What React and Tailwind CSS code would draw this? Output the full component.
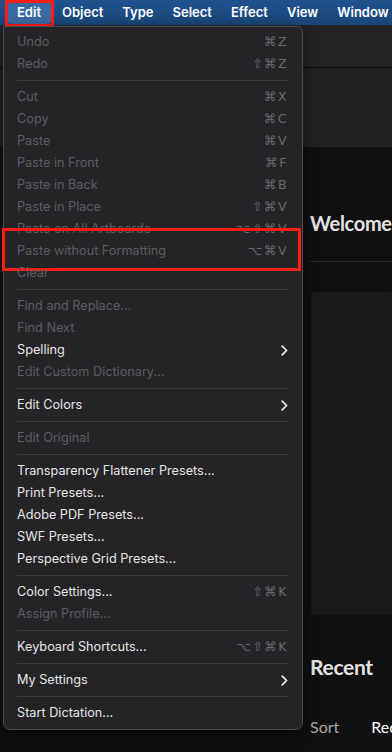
import React from "react";

const menuBar = ["Edit", "Object", "Type", "Select", "Effect", "View", "Window"];

const groups = [
    [
        { label: "Undo", keys: "⌘Z" },
        { label: "Redo", keys: "⇧⌘Z" },
    ],
    [
        { label: "Cut", keys: "⌘X" },
        { label: "Copy", keys: "⌘C" },
        { label: "Paste", keys: "⌘V" },
        { label: "Paste in Front", keys: "⌘F" },
        { label: "Paste in Back", keys: "⌘B" },
        { label: "Paste in Place", keys: "⇧⌘V" },
        { label: "Paste on All Artboards", keys: "⌥⇧⌘V" },
        { label: "Paste without Formatting", keys: "⌥⌘V", marked: true },
        { label: "Clear" },
    ],
    [
        { label: "Find and Replace..." },
        { label: "Find Next" },
        { label: "Spelling", on: true, sub: true },
        { label: "Edit Custom Dictionary..." },
    ],
    [{ label: "Edit Colors", on: true, sub: true }],
    [{ label: "Edit Original" }],
    [
        { label: "Transparency Flattener Presets...", on: true },
        { label: "Print Presets...", on: true },
        { label: "Adobe PDF Presets...", on: true },
        { label: "SWF Presets...", on: true },
        { label: "Perspective Grid Presets...", on: true },
    ],
    [
        { label: "Color Settings...", keys: "⇧⌘K", on: true },
        { label: "Assign Profile..." },
    ],
    [{ label: "Keyboard Shortcuts...", keys: "⌥⇧⌘K", on: true }],
    [{ label: "My Settings", on: true, sub: true }],
    [{ label: "Start Dictation...", on: true }],
];

function Chevron() {
    return (
        <svg width="7" height="11" viewBox="0 0 7 11" fill="none">
            <path d="M1.2 1.2L5.6 5.5L1.2 9.8" stroke="#ededed" strokeWidth="1.7" strokeLinecap="round" strokeLinejoin="round" />
        </svg>
    );
}

function MenuRow({ item }) {
    return (
        <div className="relative flex h-[22px] items-center justify-between pl-[13px] pr-[14px]">
            <span className={item.on ? "text-[#e6e6e6]" : "text-[#5d5c60]"}>
                {item.label}
            </span>
            {item.keys && (
                <span className="text-[12.5px] tracking-[1.5px] text-[#68676b]" style={{ fontFamily: "'DejaVu Sans', sans-serif" }}>
                    {item.keys}
                </span>
            )}
            {item.sub && <Chevron />}
            {/* red annotation box */}
            {item.marked && (
                <div className="absolute left-[-2px] right-[1px] top-[-12px] h-[43px] border-[3px] border-[#ff1d16]" />
            )}
        </div>
    );
}

export default function App() {
    return (
        <div className="relative h-[752px] w-[392px] overflow-hidden bg-[#101010]" style={{ fontFamily: "Inter, 'Noto Sans', sans-serif" }}>

            {/* menu bar */}
            <div className="flex h-[25px] items-center bg-gradient-to-b from-[#1f5290] to-[#1a4678] pl-[7px] text-[13px] font-semibold text-white">
                {menuBar.map((name, i) => (
                    <div
                        key={name}
                        className={
                            i === 0
                                ? "relative mr-[11px] flex h-[22px] items-center rounded-[4px] bg-[#3a6aa3] px-[10px]"
                                : "mr-[19px]"
                        }
                    >
                        {name}
                        {i === 0 && (
                            <div className="absolute bottom-[-3px] left-[-2px] right-[-3px] top-[-2px] border-[3px] border-[#ff1d16]" />
                        )}
                    </div>
                ))}
            </div>

            {/* app behind the menu */}
            <div className="h-[43px] border-b border-[#0c0c0c] bg-[#232323]" />
            <div className="h-[79px] bg-[#222222]" />
            <div className="pl-[310px]" style={{ fontFamily: "Lato, 'Open Sans', sans-serif" }}>
                <div className="whitespace-nowrap pt-[62px] text-[20px] font-bold leading-[28px] tracking-[-0.3px] text-[#e3e3e3]">Welcome</div>
                <div className="mt-[24px] h-px bg-[#2b2b2b]" />
                <div className="ml-[1px] mt-[30px] h-[323px] rounded-[4px] bg-[#1a1a1a]" />
                <div className="pt-[38px] text-[21px] font-bold leading-[28px] tracking-[-0.3px] text-[#e3e3e3]">Recent</div>
                <div className="mt-[35px] flex gap-[32px] whitespace-nowrap text-[16px] leading-[22px]">
                    <span className="text-[#a8a8a8]">Sort</span>
                    <span className="text-white">Recent</span>
                </div>
            </div>

            {/* edit menu dropdown */}
            <div className="absolute left-[3px] top-[26px] w-[300px] rounded-b-[7px] rounded-tr-[6px] border border-[#4c4b4f] bg-[#242326] pb-[5px] pt-[4px] text-[12.7px] shadow-[0_4px_14px_rgba(0,0,0,0.5)]">
                {groups.map((group, gi) => (
                    <div key={gi}>
                        {gi > 0 && <div className="mx-[13px] my-[5px] h-px bg-[#3a393c]" />}
                        {group.map((item) => (
                            <MenuRow key={item.label} item={item} />
                        ))}
                    </div>
                ))}
            </div>
        </div>
    );
}
